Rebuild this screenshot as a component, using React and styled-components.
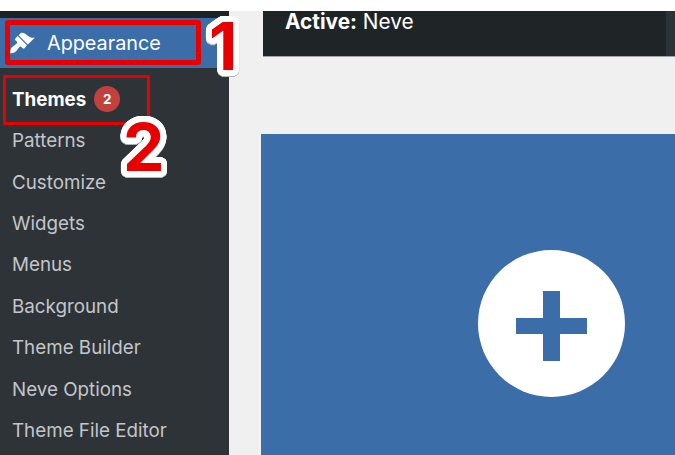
import styled, { createGlobalStyle } from 'styled-components';

const GlobalStyle = createGlobalStyle`
  html, body {
    margin: 0;
    padding: 0;
    background: #fff;
  }
`;

const subItems = [
  'Patterns',
  'Customize',
  'Widgets',
  'Menus',
  'Background',
  'Theme Builder',
  'Neve Options',
  'Theme File Editor',
];

// round white halo around the annotation digits
const halo = Array.from({ length: 40 }, (_, i) => {
  const a = (i / 40) * Math.PI * 2;
  return `${(Math.cos(a) * 6).toFixed(2)}px ${(Math.sin(a) * 6).toFixed(2)}px 0 #fff`;
}).join(', ');

const App = () => {
  return (
    <>
      <GlobalStyle />
      <Page>
        <Sidebar>
          <ActiveRow>
            <svg width="26" height="26" viewBox="0 0 20 20">
              <path
                fill="#fff"
                d="M14.48 11.06L7.41 3.99l1.5-1.5c.5-.56 2.3-.47 3.51.32 1.21.8 1.43 1.28 2.91 2.1 1.18.64 2.45 1.26 4.67.85zm-.71.71L6.7 4.7 4.93 6.47c-.39.39-.39 1.02 0 1.41l1.06 1.06c.39.39.39 1.03 0 1.42-.6.6-1.43 1.11-2.21 1.69-.35.26-.7.53-1.01.84C1.43 13.71 1 15 1 18c2-.1 3.5-.7 4.6-1.8.3-.3.55-.65.8-1 .58-.78 1.09-1.6 1.69-2.2.39-.39 1.03-.39 1.42 0l1.06 1.06c.39.39 1.02.39 1.41 0z"
              />
            </svg>
            <span>Appearance</span>
          </ActiveRow>
          <SubMenu>
            <CurrentItem>
              Themes <Badge>2</Badge>
            </CurrentItem>
            {subItems.map((item) => (
              <MenuItem key={item}>{item}</MenuItem>
            ))}
          </SubMenu>
          <MarkOne />
          <MarkTwo />
          <Digit $left={209} $top={-5}>1</Digit>
          <Digit $left={123} $top={96}>2</Digit>
        </Sidebar>
        <Content>
          <ActiveBar>
            <ActiveLabel>
              <strong>Active:</strong> Neve
            </ActiveLabel>
            <BarEdge />
          </ActiveBar>
          <AddCard>
            <PlusCircle>
              <PlusIcon />
            </PlusCircle>
          </AddCard>
        </Content>
      </Page>
    </>
  );
};

export default App;

const Page = styled.div`
  width: 675px;
  height: 455px;
  overflow: hidden;
  display: flex;
  padding-top: 11px;
  box-sizing: border-box;
  font-family: Inter, 'Liberation Sans', sans-serif;
`;

const Sidebar = styled.div`
  position: relative;
  width: 229px;
  flex-shrink: 0;
  background: #2e3338;
  border-top: 7px solid #1e2327;
  box-sizing: border-box;
`;

const ActiveRow = styled.div`
  height: 50px;
  background: #3b6ea9;
  display: flex;
  align-items: center;
  padding-left: 9px;
  gap: 12px;
  color: #fff;
  font-size: 19.8px;

  svg {
    flex-shrink: 0;
    margin-top: -1px;
  }
`;

const SubMenu = styled.div`
  display: flex;
  flex-direction: column;
  padding-top: 10.8px;
`;

const MenuItem = styled.div`
  height: 41.4px;
  line-height: 41.4px;
  padding-left: 12px;
  font-size: 18.8px;
  color: #c3c6c9;
  white-space: nowrap;
`;

const CurrentItem = styled(MenuItem)`
  color: #fff;
  font-weight: 700;
  display: flex;
  align-items: center;
  gap: 8px;
`;

const Badge = styled.span`
  width: 26px;
  height: 26px;
  border-radius: 50%;
  background: #c1413f;
  color: #fff;
  font-size: 13.5px;
  font-weight: 700;
  line-height: 26px;
  text-align: center;
`;

const MarkOne = styled.div`
  position: absolute;
  left: 5px;
  top: 2px;
  width: 186px;
  height: 35px;
  border: 5px solid #e80000;
  border-radius: 3px;
`;

const MarkTwo = styled.div`
  position: absolute;
  left: 3px;
  top: 57px;
  width: 141px;
  height: 44px;
  border: 3px solid #e80000;
`;

const Digit = styled.div`
  position: absolute;
  left: ${(p) => p.$left}px;
  top: ${(p) => p.$top}px;
  font-family: Inter, 'Liberation Sans', sans-serif;
  font-weight: 700;
  font-size: 66px;
  line-height: 1;
  color: #e80000;
  text-shadow: ${halo};
  filter: drop-shadow(0 1px 0 #b5b5b5);
`;

const Content = styled.div`
  flex: 1;
  background: #f0f0f1;
  padding-left: 32px;
  display: flex;
  flex-direction: column;
`;

const ActiveBar = styled.div`
  height: 45px;
  margin-left: 2px;
  background: #1f2427;
  border-bottom: 1px solid #a0a3a5;
  box-sizing: content-box;
  display: flex;
  justify-content: space-between;
`;

const ActiveLabel = styled.div`
  padding: 0 0 0 22px;
  font-size: 20.8px;
  line-height: 22px;
  color: #fff;

  strong {
    font-weight: 700;
  }
`;

const BarEdge = styled.div`
  width: 9px;
  background: #2c3338;
`;

const AddCard = styled.div`
  flex: 1;
  margin-top: 77px;
  background: #3b6ea9;
  display: flex;
  align-items: flex-start;
  justify-content: flex-end;
  padding: 116px 50px 0 0;
`;

const PlusCircle = styled.div`
  width: 147px;
  height: 147px;
  border-radius: 50%;
  background: #fff;
  display: flex;
  align-items: center;
  justify-content: center;
`;

const PlusIcon = styled.div`
  position: relative;
  width: 71px;
  height: 70px;
  margin-top: 4px;

  &::before,
  &::after {
    content: '';
    position: absolute;
    background: #3b6ea9;
  }

  &::before {
    left: 27px;
    top: 0;
    width: 17px;
    height: 70px;
  }

  &::after {
    left: 0;
    top: 27px;
    width: 71px;
    height: 16px;
  }
`;
